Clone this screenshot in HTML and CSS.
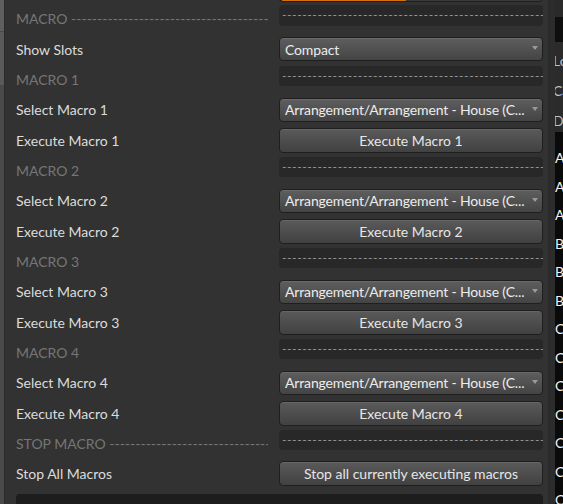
FILE: index.html
```html
<!DOCTYPE html>
<html>
<head>
<meta charset="utf-8">
<link rel="stylesheet" href="styles.css">
</head>
<body>
<div class="app">
  <div class="edge">
    <div class="edge-a"></div>
    <div class="edge-b"></div>
    <div class="edge-c"></div>
  </div>
  <div class="panel">
    <div class="rows">
      <div class="row">
        <div class="label"></div>
        <div class="slider"><div class="slider-fill" style="width:48%"></div></div>
      </div>
      <div class="row">
        <div class="label head">MACRO --------------------------------------------------------------------</div>
        <div class="field">----------------------------------------------------------------------------------------------</div>
      </div>
      <div class="row">
        <div class="label">Show Slots</div>
        <div class="select"><span class="select-text">Compact</span><span class="arrow"></span></div>
      </div>
      <div class="row">
        <div class="label head">MACRO 1</div>
        <div class="field">----------------------------------------------------------------------------------------------</div>
      </div>
      <div class="row">
        <div class="label">Select Macro 1</div>
        <div class="select"><span class="select-text">Arrangement/Arrangement - House (C...</span><span class="arrow"></span></div>
      </div>
      <div class="row">
        <div class="label">Execute Macro 1</div>
        <div class="button">Execute Macro 1</div>
      </div>
      <div class="row">
        <div class="label head">MACRO 2</div>
        <div class="field">----------------------------------------------------------------------------------------------</div>
      </div>
      <div class="row">
        <div class="label">Select Macro 2</div>
        <div class="select"><span class="select-text">Arrangement/Arrangement - House (C...</span><span class="arrow"></span></div>
      </div>
      <div class="row">
        <div class="label">Execute Macro 2</div>
        <div class="button">Execute Macro 2</div>
      </div>
      <div class="row">
        <div class="label head">MACRO 3</div>
        <div class="field">----------------------------------------------------------------------------------------------</div>
      </div>
      <div class="row">
        <div class="label">Select Macro 3</div>
        <div class="select"><span class="select-text">Arrangement/Arrangement - House (C...</span><span class="arrow"></span></div>
      </div>
      <div class="row">
        <div class="label">Execute Macro 3</div>
        <div class="button">Execute Macro 3</div>
      </div>
      <div class="row">
        <div class="label head">MACRO 4</div>
        <div class="field">----------------------------------------------------------------------------------------------</div>
      </div>
      <div class="row">
        <div class="label">Select Macro 4</div>
        <div class="select"><span class="select-text">Arrangement/Arrangement - House (C...</span><span class="arrow"></span></div>
      </div>
      <div class="row">
        <div class="label">Execute Macro 4</div>
        <div class="button">Execute Macro 4</div>
      </div>
      <div class="row">
        <div class="label head">STOP MACRO --------------------------------------------------------------------</div>
        <div class="field">----------------------------------------------------------------------------------------------</div>
      </div>
      <div class="row">
        <div class="label">Stop All Macros</div>
        <div class="button">Stop all currently executing macros</div>
      </div>
    </div>
    <div class="bottom-box"></div>
  </div>
  <div class="divider"></div>
  <div class="side">
    <div class="side-top"></div>
    <div class="side-black"></div>
    <div class="side-header">
      <div class="side-hrow">Lo</div>
      <div class="side-hrow">Ca</div>
      <div class="side-hrow">De</div>
    </div>
    <div class="side-list">
      <div class="side-item">A</div>
      <div class="side-item">A</div>
      <div class="side-item">A</div>
      <div class="side-item">B</div>
      <div class="side-item">B</div>
      <div class="side-item">B</div>
      <div class="side-item">C</div>
      <div class="side-item">C</div>
      <div class="side-item">C</div>
      <div class="side-item">C</div>
      <div class="side-item">C</div>
      <div class="side-item">C</div>
      <div class="side-item">C</div>
    </div>
  </div>
</div>
</body>
</html>
```

FILE: styles.css
```css
* { box-sizing: border-box; }

html, body {
  margin: 0;
  padding: 0;
  width: 563px;
  height: 504px;
  overflow: hidden;
  background: #323232;
  font-family: Lato, "Noto Sans", sans-serif;
}

.app {
  display: flex;
  width: 563px;
  height: 504px;
  overflow: hidden;
}

.edge {
  width: 5px;
  flex: none;
  display: flex;
  flex-direction: column;
  border-right: 1px solid #2b2b2b;
}
.edge-a { height: 32px; flex: none; background: #5f5f5f; border-bottom: 1px solid #4a4a4a; }
.edge-b { height: 53px; flex: none; background: #5a5a5a; }
.edge-c { flex: 1; background: #4a4a4a; }

.panel {
  width: 543px;
  flex: none;
  padding: 0 5px 0 11px;
  background: #323232;
}

.rows {
  margin-top: -26.5px;
}

.row {
  display: grid;
  grid-template-columns: 263px 264px;
  height: 30.33px;
  align-items: center;
}

.label {
  font-size: 14px;
  color: #dcdcdc;
  white-space: nowrap;
  overflow: hidden;
  max-width: 252px;
  line-height: 18px;
  padding-top: 1px;
}
.label.head {
  color: #767676;
}

.slider {
  align-self: end;
  margin-bottom: 1.5px;
  height: 25px;
  border: 1px solid #1e1e1e;
  border-radius: 4px;
  background: #3a3a3a;
  overflow: hidden;
  padding: 0 2px;
  display: flex;
}
.slider-fill {
  height: 100%;
  background: #d8700f;
}

.field {
  align-self: start;
  margin-top: 1.3px;
  height: 20.5px;
  border-radius: 4px;
  background: #282828;
  color: #9a9a9a;
  font-size: 12px;
  line-height: 20px;
  padding: 0 2px 0 3px;
  white-space: nowrap;
  overflow: hidden;
  letter-spacing: 0.6px;
}

.select {
  height: 24px;
  border: 1px solid #1f1f1f;
  border-radius: 4px;
  background: linear-gradient(#5e5e5e, #444444);
  box-shadow: inset 0 1px 0 rgba(255,255,255,0.08);
  display: flex;
  align-items: center;
  padding: 0 4px 0 5px;
  color: #ececec;
  font-size: 14px;
}
.select-text {
  flex: 1;
  min-width: 0;
  white-space: nowrap;
  overflow: visible;
  letter-spacing: -0.15px;
}
.arrow {
  flex: none;
  width: 0;
  height: 0;
  border-left: 3px solid transparent;
  border-right: 3px solid transparent;
  border-top: 4px solid #9a9a9a;
  margin-left: 4px;
  margin-top: -2px;
}

.button {
  height: 25px;
  border: 1px solid #1f1f1f;
  border-radius: 4px;
  background: linear-gradient(#5a5a5a, #414141);
  box-shadow: inset 0 1px 0 rgba(255,255,255,0.08);
  color: #e6e6e6;
  font-size: 14px;
  text-align: center;
  line-height: 23px;
  white-space: nowrap;
}

.bottom-box {
  margin-top: 5px;
  width: 527px;
  height: 20px;
  background: #1d1d1d;
  border-radius: 4px;
}

.divider {
  width: 7px;
  flex: none;
  background: #2c2c2c;
  border-left: 1px solid #2a2a2a;
}

.side {
  width: 8px;
  flex: none;
  display: flex;
  flex-direction: column;
  overflow: hidden;
  font-size: 14px;
  white-space: nowrap;
}
.side-top { flex: none; height: 17px; background: #2a2a2a; }
.side-black { flex: none; height: 25px; background: #0e0e0e; }
.side-header {
  flex: none;
  height: 90px;
  background: #2b2b2b;
  color: #b8c2d0;
  padding-top: 4px;
}
.side-hrow {
  height: 30px;
  line-height: 30px;
  margin-left: -2px;
  overflow: hidden;
}
.side-list {
  flex: none;
  background: #0a0a0a;
  color: #f2f2f2;
  padding-top: 12px;
}
.side-item {
  height: 28.5px;
  line-height: 28.5px;
  overflow: hidden;
}
```
